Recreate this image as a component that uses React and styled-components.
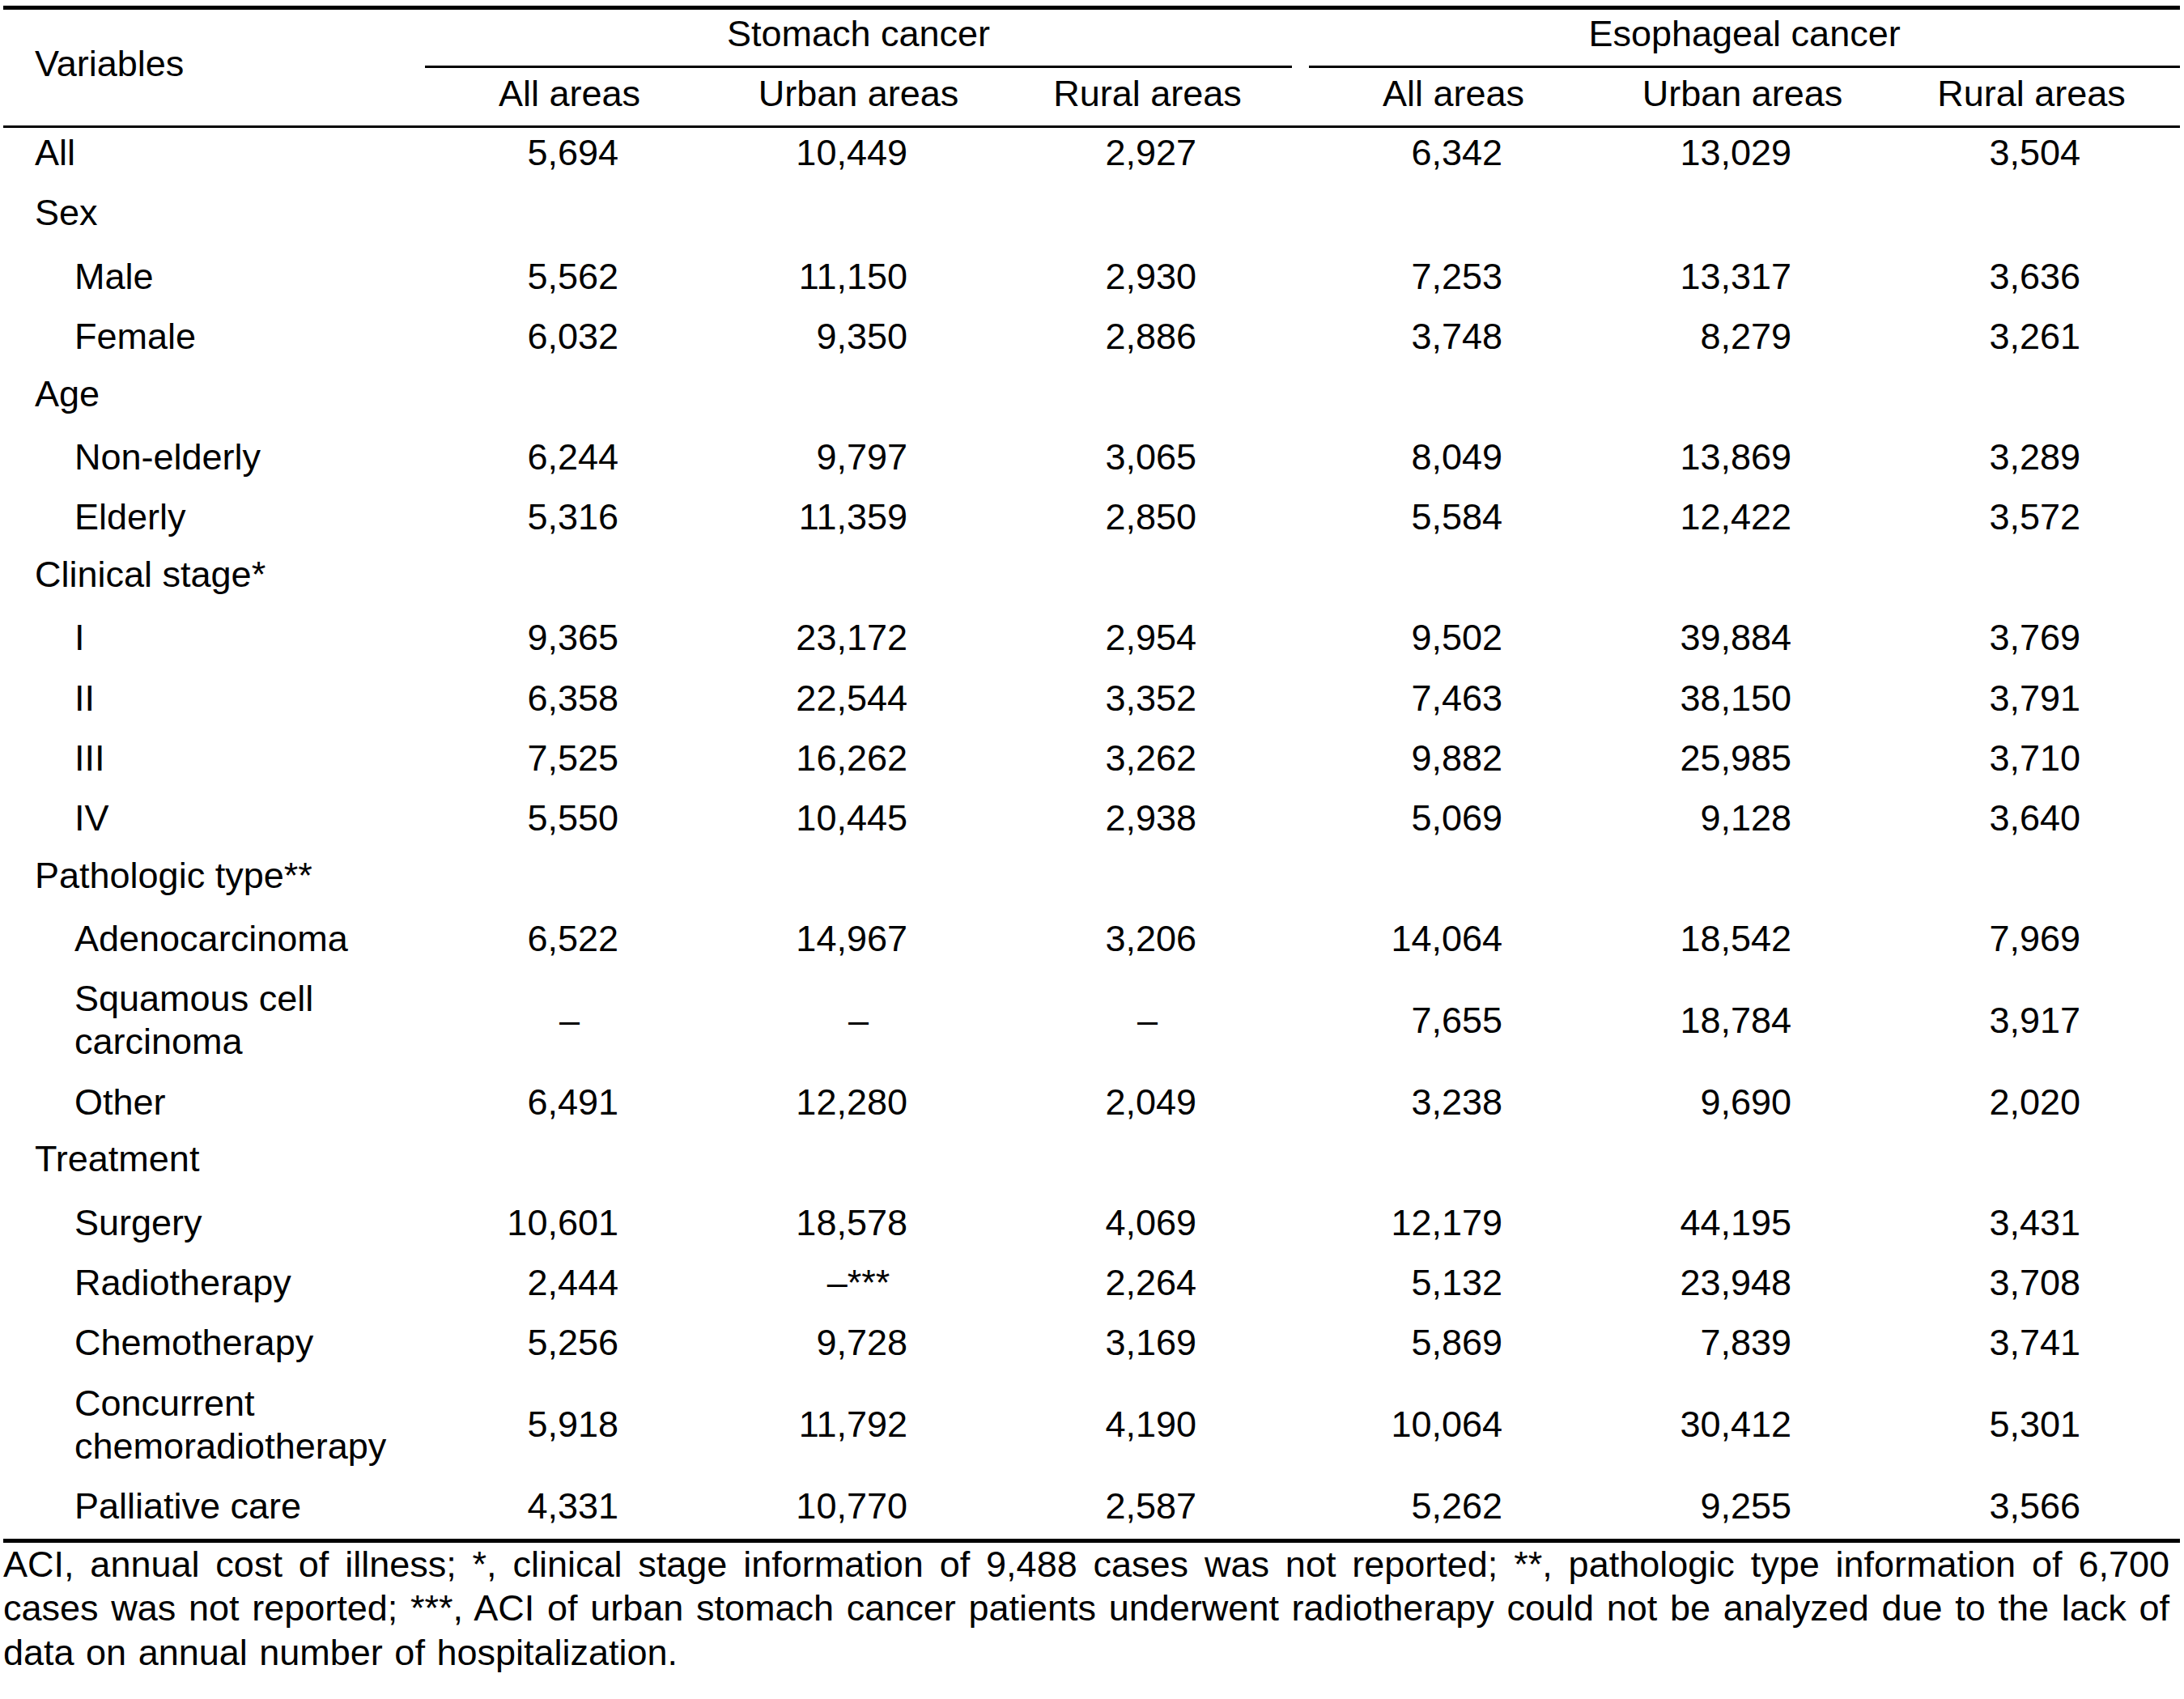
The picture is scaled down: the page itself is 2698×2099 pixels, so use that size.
import React from 'react';
import styled, { createGlobalStyle } from 'styled-components';

const GlobalStyle = createGlobalStyle`
  html, body {
    margin: 0;
    padding: 0;
    background: #fff;
  }
  body {
    font-family: "Liberation Sans", Arial, Helvetica, sans-serif;
    color: #000;
  }
`;

const rows = [
  { label: 'All', values: ['5,694', '10,449', '2,927', '6,342', '13,029', '3,504'] },
  { label: 'Sex' },
  { label: 'Male', sub: true, values: ['5,562', '11,150', '2,930', '7,253', '13,317', '3,636'] },
  { label: 'Female', sub: true, values: ['6,032', '9,350', '2,886', '3,748', '8,279', '3,261'] },
  { label: 'Age' },
  { label: 'Non-elderly', sub: true, values: ['6,244', '9,797', '3,065', '8,049', '13,869', '3,289'] },
  { label: 'Elderly', sub: true, values: ['5,316', '11,359', '2,850', '5,584', '12,422', '3,572'] },
  { label: 'Clinical stage*' },
  { label: 'I', sub: true, values: ['9,365', '23,172', '2,954', '9,502', '39,884', '3,769'] },
  { label: 'II', sub: true, values: ['6,358', '22,544', '3,352', '7,463', '38,150', '3,791'] },
  { label: 'III', sub: true, values: ['7,525', '16,262', '3,262', '9,882', '25,985', '3,710'] },
  { label: 'IV', sub: true, values: ['5,550', '10,445', '2,938', '5,069', '9,128', '3,640'] },
  { label: 'Pathologic type**' },
  { label: 'Adenocarcinoma', sub: true, values: ['6,522', '14,967', '3,206', '14,064', '18,542', '7,969'] },
  { label: 'Squamous cell carcinoma', sub: true, values: ['–', '–', '–', '7,655', '18,784', '3,917'] },
  { label: 'Other', sub: true, values: ['6,491', '12,280', '2,049', '3,238', '9,690', '2,020'] },
  { label: 'Treatment' },
  { label: 'Surgery', sub: true, values: ['10,601', '18,578', '4,069', '12,179', '44,195', '3,431'] },
  { label: 'Radiotherapy', sub: true, values: ['2,444', '–***', '2,264', '5,132', '23,948', '3,708'] },
  { label: 'Chemotherapy', sub: true, values: ['5,256', '9,728', '3,169', '5,869', '7,839', '3,741'] },
  { label: 'Concurrent chemoradiotherapy', sub: true, values: ['5,918', '11,792', '4,190', '10,064', '30,412', '5,301'] },
  { label: 'Palliative care', sub: true, values: ['4,331', '10,770', '2,587', '5,262', '9,255', '3,566'] },
];

const areas = ['All areas', 'Urban areas', 'Rural areas'];
const colWidths = [521, 357, 357, 357, 21, 357, 357, 357, 5];

const App = () => {
  return (
    <Page>
      <GlobalStyle />
      <DataTable>
        <colgroup>
          {colWidths.map((w, i) => <col key={i} style={{ width: w }} />)}
        </colgroup>
        <thead>
          <tr>
            <VariablesHead rowSpan={2}>Variables</VariablesHead>
            <GroupHead colSpan={3}>Stomach cancer</GroupHead>
            <GroupGap />
            <GroupHead colSpan={4}>Esophageal cancer</GroupHead>
          </tr>
          <tr>
            {areas.map((a) => <AreaHead key={'s' + a}>{a}</AreaHead>)}
            <AreaHead />
            {areas.map((a) => <AreaHead key={'e' + a}>{a}</AreaHead>)}
            <AreaHead />
          </tr>
        </thead>
        <tbody>
          {rows.map((row) => (
            <tr key={row.label}>
              <LabelCell $sub={row.sub}>{row.label}</LabelCell>
              {row.values ? (
                <>
                  {row.values.slice(0, 3).map((v, i) => (
                    <ValueCell key={i} $sub={row.sub} $center={v.startsWith('–')}>{v}</ValueCell>
                  ))}
                  <ValueCell $sub={row.sub} />
                  {row.values.slice(3).map((v, i) => (
                    <ValueCell key={i + 3} $sub={row.sub} $center={v.startsWith('–')}>{v}</ValueCell>
                  ))}
                  <ValueCell $sub={row.sub} />
                </>
              ) : (
                <ValueCell $sub={row.sub} colSpan={8} />
              )}
            </tr>
          ))}
        </tbody>
      </DataTable>
      <Footnote>
        ACI, annual cost of illness; *, clinical stage information of 9,488 cases was not reported; **, pathologic type
        information of 6,700 cases was not reported; ***, ACI of urban stomach cancer patients underwent radiotherapy
        could not be analyzed due to the lack of data on annual number of hospitalization.
      </Footnote>
    </Page>
  );
};

export default App;

const Page = styled.div`
  width: 2689px;
  padding: 7px 0 0 4px;
  font-size: 45px;
  line-height: 53px;
`;

const DataTable = styled.table`
  width: 2689px;
  table-layout: fixed;
  border-collapse: separate;
  border-spacing: 0;
  border-top: 5px solid #000;
  border-bottom: 5px solid #000;
  font-size: 45px;
  line-height: 53px;

  th {
    font-weight: 400;
  }
`;

const VariablesHead = styled.th`
  text-align: left;
  vertical-align: middle;
  padding: 0 0 11px 39px;
  border-bottom: 3px solid #000;
`;

const GroupHead = styled.th`
  text-align: center;
  padding: 2.5px 0 13.5px;
  border-bottom: 3px solid #000;
  white-space: nowrap;
`;

const GroupGap = styled.th`
  padding: 2.5px 0 13.5px;
`;

const AreaHead = styled.th`
  text-align: center;
  padding: 4.5px 0 13.5px;
  border-bottom: 3px solid #000;
  white-space: nowrap;
`;

const LabelCell = styled.td`
  text-align: left;
  vertical-align: middle;
  padding: ${(p) => (p.$sub ? '8px 0 13.4px 88px' : '4px 0 17.4px 39px')};
`;

const ValueCell = styled.td`
  vertical-align: middle;
  white-space: nowrap;
  text-align: ${(p) => (p.$center ? 'center' : 'right')};
  padding: ${(p) => (p.$sub ? '8px' : '4px')} ${(p) => (p.$center ? '0' : '118px')}
    ${(p) => (p.$sub ? '13.4px' : '17.4px')} 0;
`;

const Footnote = styled.p`
  margin: 0;
  padding-right: 13px;
  font-size: 45px;
  line-height: 54.5px;
  word-spacing: 2px;
  text-align: justify;
`;
